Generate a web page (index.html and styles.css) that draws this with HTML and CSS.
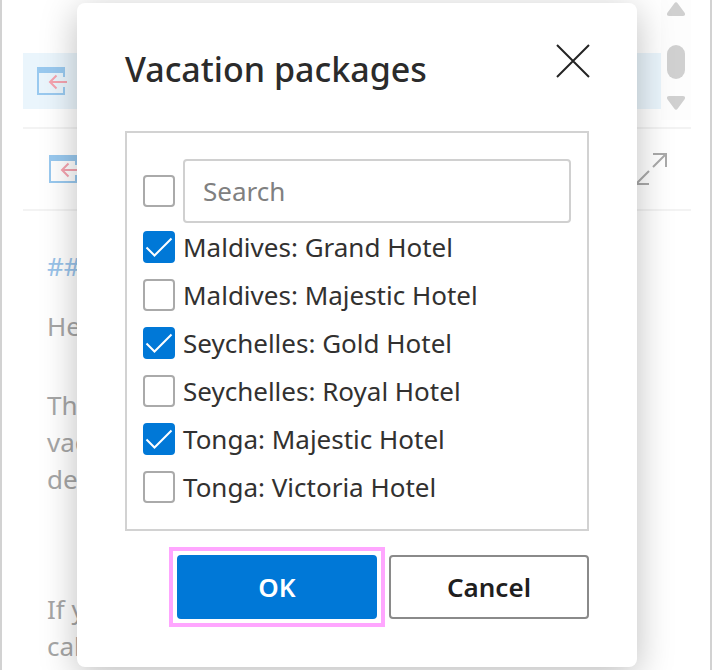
FILE: index.html
```html
<!DOCTYPE html>
<html lang="en">
<head>
<meta charset="utf-8">
<meta name="viewport" content="width=device-width, initial-scale=1">
<title>Vacation packages</title>
<link rel="stylesheet" href="styles.css">
</head>
<body>
<main class="pane">
  <div class="list">
    <div class="list-item">
      <svg class="addin" viewBox="0 0 30 28" aria-hidden="true">
        <path class="bar" d="M0 0h28v6H0z"/>
        <path class="frame" d="M1 4v23h26v-7M27 5v5"/>
        <path class="arrow" d="M30 15H13M19.500 8.500L13 15l6.500 6.500"/>
      </svg>
    </div>
    <svg class="scroller" viewBox="0 0 30 120" aria-hidden="true">
      <path d="M13.200 3.500q1.800-2.500 3.600 0l7 9.500q1 3-2 3H8.200q-3 0-2-3z"/>
      <rect x="6" y="45" width="18" height="34" rx="9"/>
      <path d="M13.200 108.500q1.800 2.500 3.600 0l7-9.500q1-3-2-3H8.200q-3 0-2 3z"/>
    </svg>
  </div>
  <div class="toolbar">
    <svg class="addin" viewBox="0 0 30 28" aria-hidden="true">
      <path class="bar" d="M0 0h28v6H0z"/>
      <path class="frame" d="M1 4v23h26v-7M27 5v5"/>
      <path class="arrow" d="M30 15H13M19.500 8.500L13 15l6.500 6.500"/>
    </svg>
    <svg class="expand" viewBox="0 0 32 32" aria-hidden="true">
      <path d="M18 1h13v13M31 1L18 14M14 31H1V18M1 31l13-13"/>
    </svg>
  </div>
  <div class="mail">
    <p class="marker">##</p>
    <p>He</p>
    <p class="block">Th<br>vac<br>de</p>
    <p class="closing">If y<br>cal</p>
  </div>
</main>

<div class="overlay">
  <form class="dialog" role="dialog" aria-labelledby="dialog-title">
    <header class="dialog-head">
      <h1 id="dialog-title">Vacation packages</h1>
      <button class="close" type="button" aria-label="Close">
        <svg viewBox="0 0 32 32" aria-hidden="true"><path d="M0 0l32 32M32 0L0 32"/></svg>
      </button>
    </header>
    <div class="picker">
      <div class="search-row">
        <span class="tick"><input type="checkbox" aria-label="Select all"></span>
        <input class="search" type="text" placeholder="Search" aria-label="Search">
      </div>
      <label class="option"><span class="tick"><input type="checkbox" checked><svg viewBox="0 0 32 32" aria-hidden="true"><path d="M3.500 16.500l8 8L28.500 7.500"/></svg></span><span>Maldives: Grand Hotel</span></label>
      <label class="option"><span class="tick"><input type="checkbox"></span><span>Maldives: Majestic Hotel</span></label>
      <label class="option"><span class="tick"><input type="checkbox" checked><svg viewBox="0 0 32 32" aria-hidden="true"><path d="M3.500 16.500l8 8L28.500 7.500"/></svg></span><span>Seychelles: Gold Hotel</span></label>
      <label class="option"><span class="tick"><input type="checkbox"></span><span>Seychelles: Royal Hotel</span></label>
      <label class="option"><span class="tick"><input type="checkbox" checked><svg viewBox="0 0 32 32" aria-hidden="true"><path d="M3.500 16.500l8 8L28.500 7.500"/></svg></span><span>Tonga: Majestic Hotel</span></label>
      <label class="option"><span class="tick"><input type="checkbox"></span><span>Tonga: Victoria Hotel</span></label>
    </div>
    <footer class="actions">
      <button class="btn primary" type="button">OK</button>
      <button class="btn" type="button">Cancel</button>
    </footer>
  </form>
</div>
</body>
</html>
```
FILE: styles.css
```css
* { box-sizing: border-box; }

body {
  margin: 0;
  font-family: "Noto Sans", "Open Sans", sans-serif;
  font-size: 26px;
  color: #323130;
  background: #fff;
}

button, input { font: inherit; }
h1, p { margin: 0; }
svg { display: block; }

.pane {
  height: 100vh;
  overflow: hidden;
  padding: 0 19px 0 21px;
  border: solid #d2d2d2;
  border-width: 0 2px;
}

.list {
  display: flex;
  height: 129px;
  border-bottom: 2px solid #f3f3f3;
}

.list-item {
  flex: 1;
  height: 56px;
  margin-top: 53px;
  padding: 14px;
  background: #eaf5fc;
}

.scroller { width: 30px; height: 120px; background: #fdfdfd; fill: #d0d0d0; }

.toolbar {
  display: flex;
  align-items: center;
  justify-content: space-between;
  height: 82px;
  padding: 0 24px 0 26px;
  border-bottom: 2px solid #f3f3f3;
}

.addin { width: 30px; height: 28px; fill: none; stroke-width: 2; }
.bar { fill: #99c9ef; stroke: none; }
.frame { stroke: #99c9ef; }
.arrow { stroke: #f5a3af; }
.expand { width: 32px; height: 32px; fill: none; stroke: #aaa; stroke-width: 2; }

.mail {
  padding: 37px 24px 0;
  line-height: 37px;
  color: #a6a6a6;
}
.marker { margin-bottom: 23px; color: #99c3ea; }
.block { margin-top: 42px; }
.closing { margin-top: 93px; }

.overlay {
  position: absolute;
  inset: 0;
  padding: 3px 75px 3px 77px;
  overflow: hidden;
}

.dialog {
  padding: 42px 48px 48px;
  border-radius: 8px;
  background: #fff;
  box-shadow: 0 8px 36px rgba(0, 0, 0, .26);
}

.dialog-head {
  display: flex;
  justify-content: space-between;
  height: 86px;
}

h1 {
  font-size: 34px;
  font-weight: 500;
  line-height: 48px;
  color: #2b2b2b;
}

.close {
  width: 32px;
  height: 32px;
  padding: 0;
  border: 0;
  background: none;
}
.close svg { overflow: visible; stroke: #242424; stroke-width: 2; }

.picker {
  display: grid;
  grid-template-columns: minmax(0, 1fr);
  gap: 16px;
  padding: 26px 16px;
  border: 2px solid #d2d2d2;
}

.search-row { display: flex; align-items: center; gap: 8px; margin-bottom: -8px; }

.search {
  flex: 1;
  min-width: 0;
  height: 64px;
  padding: 0 18px;
  border: 2px solid #d0d0d0;
  border-radius: 4px;
  background: #fff;
  outline: 0;
}
.search::placeholder { color: #808080; opacity: 1; }

.option { display: flex; align-items: center; gap: 8px; height: 32px; line-height: 32px; }

.tick { display: grid; flex: none; width: 32px; height: 32px; }
.tick > * { grid-area: 1 / 1; }
.tick input {
  width: 32px;
  height: 32px;
  margin: 0;
  appearance: none;
  border: 2px solid #aaa;
  border-radius: 4px;
  background: #fff;
}
.tick input:checked { border-color: #0078d7; background: #0078d7; }
.tick svg { z-index: 1; fill: none; stroke: #fff; stroke-width: 2; pointer-events: none; }

.actions { display: flex; justify-content: flex-end; gap: 12px; margin-top: 24px; }

.btn {
  position: relative;
  width: 200px;
  height: 64px;
  padding: 0;
  border: 2px solid #8a8a8a;
  border-radius: 4px;
  background: #fff;
  color: #1f1f1f;
  font-weight: 600;
}
.primary {
  border-color: #0078d7;
  background: #0078d7;
  color: #fff;
}
.primary::after {
  content: "";
  position: absolute;
  inset: -10px;
  border: 4px solid #ffa6ff;
}
```
